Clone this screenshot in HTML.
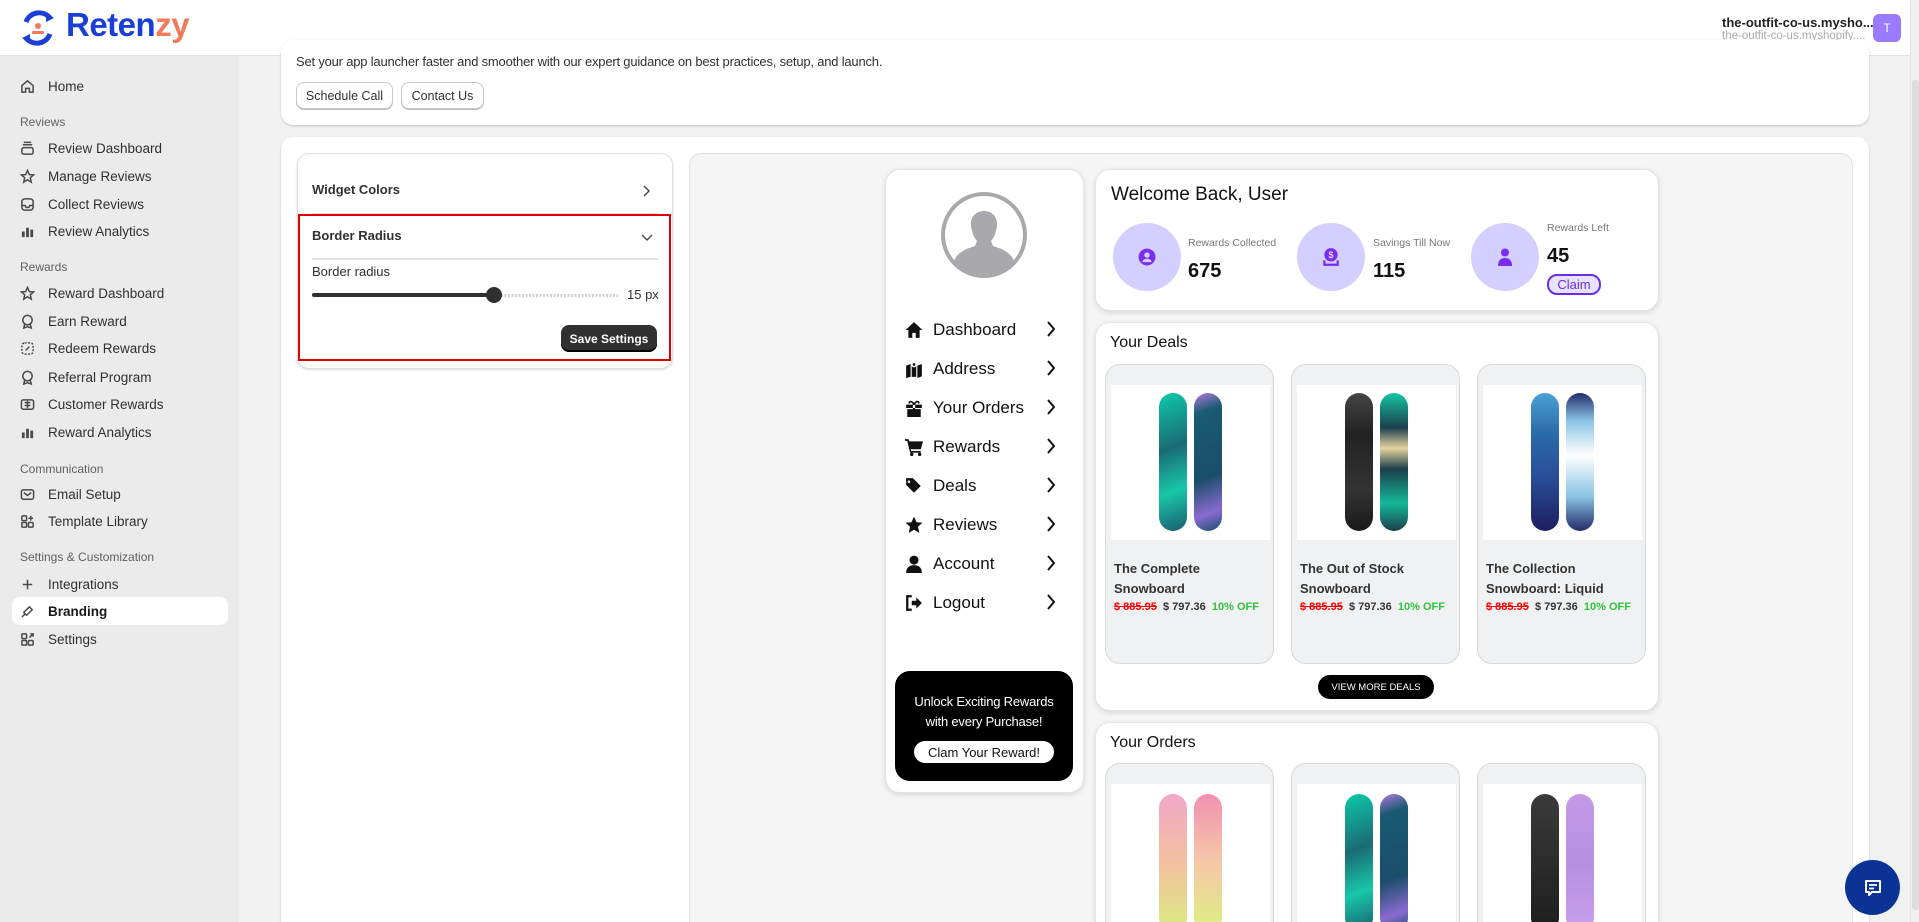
<!DOCTYPE html>
<html><head><meta charset="utf-8">
<style>
*{box-sizing:border-box;margin:0;padding:0}
html,body{width:1919px;height:922px;overflow:hidden}
body{background:#f1f1f1;font-family:"Liberation Sans",sans-serif;color:#303030}
#root{position:relative;width:1919px;height:922px;overflow:hidden;background:#f1f1f1}
.abs{position:absolute}
#hdr{left:0;top:0;width:1910px;height:56px;background:#fff;border-bottom:1px solid #e1e1e1}
#sb{left:0;top:56px;width:239px;height:866px;background:#ebebeb}
.si{position:absolute;left:20px;font-size:13.5px;color:#303030;display:flex;align-items:center;height:20px}
.si svg{width:15px;height:15px;margin-right:13px;stroke:#4a4a4a;fill:none;stroke-width:1.6}
.sl{position:absolute;left:20px;font-size:12px;color:#616161}
.card{background:#fff;border-radius:12px;box-shadow:0 1px 2px rgba(0,0,0,.2)}
.btn{position:absolute;background:#fff;border:1px solid #c9c9c9;border-radius:8px;font-size:12.5px;display:flex;align-items:center;justify-content:center;box-shadow:0 1px 0 #bbb}
.pc{position:absolute;background:#fff;border-radius:15px;box-shadow:0 2px 6px rgba(0,0,0,.12);border:1px solid #e4e4e4}
.mi{position:absolute;left:905px;width:159px;display:flex;align-items:center;font-size:17px;color:#111;height:22px}
.mi .ic{width:18px;height:18px;margin-right:10px;fill:#111}
.mi .ch{position:absolute;right:8px;top:2px;width:10px;height:16px}
.circ{position:absolute;width:68px;height:68px;border-radius:50%;background:#d3d0ff;display:flex;align-items:center;justify-content:center}
.prod{position:absolute;width:169px;height:300px;background:#f0f1f3;border:1px solid #d8d8d8;border-radius:15px;overflow:hidden}
.prod .img{position:absolute;left:5px;top:20px;width:159px;height:155px;background:#fff}
.board{position:absolute;width:28px;height:138px;border-radius:14px}
.prod .t{position:absolute;left:8px;top:194px;font-size:13px;font-weight:bold;line-height:20px;color:#333}
.prod .p{position:absolute;left:8px;top:236px;font-size:11px;font-weight:bold;white-space:nowrap}
</style></head><body><div id="root">

<div id="hdr" class="abs">
  <svg class="abs" style="left:18px;top:8px" width="40" height="40" viewBox="0 0 40 40">
    <path d="M8 14 A14 14 0 0 1 32 10" stroke="#1a3fd6" stroke-width="5" fill="none"/>
    <path d="M32 26 A14 14 0 0 1 8 30" stroke="#1a3fd6" stroke-width="5" fill="none"/>
    <path d="M28 4 L36 10 L28 14Z" fill="#1a3fd6"/><path d="M12 36 L4 30 L12 26Z" fill="#1a3fd6"/>
    <circle cx="20" cy="18" r="3" fill="#f07a5a"/><rect x="14" y="23" width="12" height="3" rx="1.5" fill="#f07a5a"/>
  </svg>
  <div class="abs" style="left:66px;top:6px;font-size:33px;font-weight:bold;letter-spacing:-0.5px"><span style="color:#1a3fd6">Reten</span><span style="color:#f07a5a">zy</span></div>
  <div class="abs" style="left:1722px;top:15px;font-size:13px;font-weight:bold;color:#222">the-outfit-co-us.mysho...</div>
  <div class="abs" style="left:1722px;top:30px;font-size:11.5px;color:#aaa">the-outfit-co-us.myshopify....</div>
  <div class="abs" style="left:1873px;top:14px;width:28px;height:28px;border-radius:6px;background:#9a7bff;color:#fff;font-size:12px;display:flex;align-items:center;justify-content:center">T</div>
</div>
<div class="abs" style="left:1910px;top:0;width:9px;height:922px;background:#f0f0f0;border-left:1px solid #e4e4e4"><div style="position:absolute;left:1px;top:80px;width:7px;height:830px;background:#dcdcdc;border-radius:4px"></div></div>

<div id="sb" class="abs"></div>
<div class="si" style="top:76px"><svg viewBox="0 0 16 16"><path d="M2 7 L8 2 L14 7 V14 H10 V10 H6 V14 H2Z"/></svg>Home</div>
<div class="sl" style="top:115px">Reviews</div>
<div class="si" style="top:138px"><svg viewBox="0 0 16 16"><rect x="2" y="7" width="12" height="7" rx="2"/><path d="M3 4H13M4 1.5H12"/></svg>Review Dashboard</div>
<div class="si" style="top:166px"><svg viewBox="0 0 16 16"><path d="M8 1.5 L10 6 L14.5 6.3 L11 9.3 L12 14 L8 11.5 L4 14 L5 9.3 L1.5 6.3 L6 6Z"/></svg>Manage Reviews</div>
<div class="si" style="top:194px"><svg viewBox="0 0 16 16"><rect x="2" y="2" width="12" height="12" rx="3"/><path d="M2 9H5.5L6.5 11H9.5L10.5 9H14"/></svg>Collect Reviews</div>
<div class="si" style="top:221px"><svg viewBox="0 0 16 16" style="fill:#4a4a4a;stroke:none"><rect x="2" y="8" width="3" height="6"/><rect x="6.5" y="4" width="3" height="10"/><rect x="11" y="6" width="3" height="8"/></svg>Review Analytics</div>
<div class="sl" style="top:260px">Rewards</div>
<div class="si" style="top:283px"><svg viewBox="0 0 16 16"><path d="M8 1.5 L10 6 L14.5 6.3 L11 9.3 L12 14 L8 11.5 L4 14 L5 9.3 L1.5 6.3 L6 6Z"/></svg>Reward Dashboard</div>
<div class="si" style="top:311px"><svg viewBox="0 0 16 16"><circle cx="8" cy="6.5" r="5"/><path d="M5 11 L4 15 L8 13.5 L12 15 L11 11"/></svg>Earn Reward</div>
<div class="si" style="top:338px"><svg viewBox="0 0 16 16" stroke-dasharray="2 1.6"><rect x="2" y="2" width="12" height="12" rx="3"/><path d="M6 10L10 6" stroke-dasharray="none"/></svg>Redeem Rewards</div>
<div class="si" style="top:367px"><svg viewBox="0 0 16 16"><circle cx="8" cy="6.5" r="5"/><path d="M5 11 L4 15 L8 13.5 L12 15 L11 11"/></svg>Referral Program</div>
<div class="si" style="top:394px"><svg viewBox="0 0 16 16"><rect x="1.5" y="3" width="13" height="10" rx="2"/><path d="M5 6H11M5 9H11M8 4V12"/></svg>Customer Rewards</div>
<div class="si" style="top:422px"><svg viewBox="0 0 16 16" style="fill:#4a4a4a;stroke:none"><rect x="2" y="8" width="3" height="6"/><rect x="6.5" y="4" width="3" height="10"/><rect x="11" y="6" width="3" height="8"/></svg>Reward Analytics</div>
<div class="sl" style="top:462px">Communication</div>
<div class="si" style="top:484px"><svg viewBox="0 0 16 16"><rect x="1.5" y="3" width="13" height="10" rx="2"/><path d="M4 6L8 9L12 6"/></svg>Email Setup</div>
<div class="si" style="top:511px"><svg viewBox="0 0 16 16"><rect x="2" y="2" width="5" height="5" rx="1"/><rect x="2" y="9" width="5" height="5" rx="1"/><rect x="9" y="9" width="5" height="5" rx="1"/><path d="M11.5 2V7M9 4.5H14"/></svg>Template Library</div>
<div class="sl" style="top:550px">Settings &amp; Customization</div>
<div class="si" style="top:574px"><svg viewBox="0 0 16 16"><path d="M8 3V13M3 8H13"/></svg>Integrations</div>
<div class="abs" style="left:12px;top:597px;width:216px;height:28px;background:#fff;border-radius:8px"></div>
<div class="si" style="top:601px;font-weight:bold;color:#1a1a1a"><svg viewBox="0 0 16 16"><path d="M2 14L5 11M4 9L7 12L13 6L10 3Z"/></svg>Branding</div>
<div class="si" style="top:629px"><svg viewBox="0 0 16 16"><rect x="2" y="2" width="5" height="5" rx="1"/><rect x="2" y="9" width="5" height="5" rx="1"/><rect x="9" y="9" width="5" height="5" rx="1"/><path d="M10 6L14 2M11 2H14V5"/></svg>Settings</div>

<div class="abs card" style="left:281px;top:40px;width:1588px;height:85px"></div>
<div class="abs" style="left:296px;top:54px;font-size:13px;letter-spacing:-0.2px;color:#303030">Set your app launcher faster and smoother with our expert guidance on best practices, setup, and launch.</div>
<div class="btn" style="left:296px;top:82px;width:97px;height:27px">Schedule Call</div>
<div class="btn" style="left:401px;top:82px;width:83px;height:27px">Contact Us</div>

<div class="abs card" style="left:281px;top:137px;width:1588px;height:785px;border-radius:12px 12px 0 0"></div>

<div class="abs" style="left:297px;top:153px;width:376px;height:216px;background:#fff;border:1px solid #e0e0e0;border-radius:12px;box-shadow:0 1px 2px rgba(0,0,0,.15)"></div>
<div class="abs" style="left:312px;top:182px;font-size:13px;font-weight:bold;color:#303030">Widget Colors</div>
<svg class="abs" style="left:641px;top:185px" width="10" height="12" viewBox="0 0 10 12"><path d="M3 1L8 6L3 11" stroke="#444" stroke-width="1.4" fill="none"/></svg>
<div class="abs" style="left:312px;top:213px;width:346px;height:1px;background:#e3e3e3"></div>
<div class="abs" style="left:298px;top:214px;width:373px;height:147px;border:2px solid #e00000"></div>
<div class="abs" style="left:312px;top:228px;font-size:13px;font-weight:bold;color:#303030">Border Radius</div>
<svg class="abs" style="left:641px;top:232px" width="12" height="10" viewBox="0 0 12 10"><path d="M1 3L6 8L11 3" stroke="#444" stroke-width="1.4" fill="none"/></svg>
<div class="abs" style="left:312px;top:258px;width:346px;height:2px;background:#e3e3e3"></div>
<div class="abs" style="left:312px;top:264px;font-size:13px;color:#303030">Border radius</div>
<div class="abs" style="left:312px;top:293px;width:182px;height:4px;background:#303030;border-radius:2px"></div>
<div class="abs" style="left:494px;top:294px;width:124px;height:3px;background:repeating-linear-gradient(90deg,#d0d0d0 0 2px,transparent 2px 3.5px)"></div>
<div class="abs" style="left:486px;top:287px;width:16px;height:16px;border-radius:50%;background:#303030"></div>
<div class="abs" style="left:627px;top:287px;font-size:13px;color:#303030">15 px</div>
<div class="abs" style="left:561px;top:325px;width:96px;height:27px;background:#303030;border-radius:8px;color:#fff;font-size:12px;font-weight:bold;display:flex;align-items:center;justify-content:center;box-shadow:inset 0 -2px 0 #000">Save Settings</div>

<div class="abs" style="left:689px;top:153px;width:1164px;height:769px;background:#f5f5f5;border:1px solid #e0e0e0;border-bottom:none;border-radius:12px 12px 0 0"></div>

<div class="pc" style="left:885px;top:169px;width:199px;height:624px"></div>
<svg class="abs" style="left:940px;top:191px" width="88" height="88" viewBox="0 0 88 88">
  <circle cx="44" cy="44" r="41" fill="#fff" stroke="#a9a9ad" stroke-width="4"/>
  <path d="M44 20c-9 0-14 7-13 15 1 6 3 12 6 15l-2 5c-10 3-18 7-21 15 8 9 18 13 30 13s22-4 30-13c-3-8-11-12-21-15l-2-5c3-3 5-9 6-15 1-8-4-15-13-15z" fill="#a9a9ad"/>
</svg>
<div class="mi" style="top:319px"><svg class="ic" viewBox="0 0 16 16"><path d="M8 1L0.5 8H3V15H6.5V10.5H9.5V15H13V8H15.5Z"/></svg>Dashboard<svg class="ch" viewBox="0 0 10 16"><path d="M2 1L8 8L2 15" stroke="#111" stroke-width="2" fill="none"/></svg></div>
<div class="mi" style="top:358px"><svg class="ic" viewBox="0 0 16 16"><path d="M1 5L5 3.5V15L1 16ZM6 3.5L10 5V15L6 15ZM11 5L15 3.5V14.5L11 16Z"/><circle cx="8" cy="4" r="2.5" fill="#fff"/><circle cx="8" cy="4" r="1.2"/></svg>Address<svg class="ch" viewBox="0 0 10 16"><path d="M2 1L8 8L2 15" stroke="#111" stroke-width="2" fill="none"/></svg></div>
<div class="mi" style="top:397px"><svg class="ic" viewBox="0 0 16 16"><path d="M1 5H15V8H1ZM2 9H7V16H2ZM9 9H14V16H9ZM7 5V16H9V5Z"/><path d="M8 5C6 1 3 2 4 4M8 5C10 1 13 2 12 4" stroke="#111" fill="none" stroke-width="1.5"/></svg>Your Orders<svg class="ch" viewBox="0 0 10 16"><path d="M2 1L8 8L2 15" stroke="#111" stroke-width="2" fill="none"/></svg></div>
<div class="mi" style="top:436px"><svg class="ic" viewBox="0 0 16 16"><path d="M0 1H3L4 3H16L14 10H5L5.5 11.5H14V13H4.5L2 2.5H0Z"/><circle cx="6" cy="14.5" r="1.5"/><circle cx="13" cy="14.5" r="1.5"/></svg>Rewards<svg class="ch" viewBox="0 0 10 16"><path d="M2 1L8 8L2 15" stroke="#111" stroke-width="2" fill="none"/></svg></div>
<div class="mi" style="top:475px"><svg class="ic" viewBox="0 0 16 16"><path d="M1 1H7L14 8L8 14L1 7ZM3.5 3a1.2 1.2 0 1 0 0.1 0Z"/></svg>Deals<svg class="ch" viewBox="0 0 10 16"><path d="M2 1L8 8L2 15" stroke="#111" stroke-width="2" fill="none"/></svg></div>
<div class="mi" style="top:514px"><svg class="ic" viewBox="0 0 16 16"><path d="M8 0.5L10.3 5.5L15.5 6L11.5 9.6L12.7 15L8 12.2L3.3 15L4.5 9.6L0.5 6L5.7 5.5Z"/></svg>Reviews<svg class="ch" viewBox="0 0 10 16"><path d="M2 1L8 8L2 15" stroke="#111" stroke-width="2" fill="none"/></svg></div>
<div class="mi" style="top:553px"><svg class="ic" viewBox="0 0 16 16"><circle cx="8" cy="4.5" r="4"/><path d="M1 16C1 11 4 9 8 9S15 11 15 16Z"/></svg>Account<svg class="ch" viewBox="0 0 10 16"><path d="M2 1L8 8L2 15" stroke="#111" stroke-width="2" fill="none"/></svg></div>
<div class="mi" style="top:592px"><svg class="ic" viewBox="0 0 16 16"><path d="M6 2H2V14H6" stroke="#111" stroke-width="2" fill="none"/><path d="M6 6H10V3L15 8L10 13V10H6Z"/></svg>Logout<svg class="ch" viewBox="0 0 10 16"><path d="M2 1L8 8L2 15" stroke="#111" stroke-width="2" fill="none"/></svg></div>
<div class="abs" style="left:895px;top:671px;width:178px;height:110px;background:#000;border-radius:15px"></div>
<div class="abs" style="left:895px;top:692px;width:178px;text-align:center;color:#fff;font-size:13px;line-height:20px;letter-spacing:-0.2px">Unlock Exciting Rewards<br>with every Purchase!</div>
<div class="abs" style="left:914px;top:741px;width:140px;height:22px;background:#fff;border-radius:11px;font-size:13px;color:#111;display:flex;align-items:center;justify-content:center">Clam Your Reward!</div>

<div class="pc" style="left:1095px;top:169px;width:564px;height:142px"></div>
<div class="abs" style="left:1111px;top:184px;font-size:19px;color:#111">Welcome Back, User</div>
<div class="circ" style="left:1113px;top:223px"><svg width="18" height="18" viewBox="0 0 16 16"><circle cx="8" cy="8" r="7.5" fill="#7a2df0"/><circle cx="8" cy="6.3" r="2.4" fill="#d3d0ff"/><path d="M3.8 12.5C4.5 10 6 9.5 8 9.5S11.5 10 12.2 12.5" fill="#d3d0ff"/></svg></div>
<div class="abs" style="left:1188px;top:237px;font-size:10.5px;color:#777">Rewards Collected</div>
<div class="abs" style="left:1188px;top:260px;font-size:20px;font-weight:bold;color:#111">675</div>
<div class="circ" style="left:1297px;top:223px"><svg width="18" height="20" viewBox="0 0 16 18"><circle cx="8" cy="7" r="6" fill="#7a2df0"/><text x="8" y="10" font-size="8" fill="#fff" text-anchor="middle" font-family="Liberation Sans">$</text><path d="M1 12V17H15V12H13V15H3V12Z" fill="#7a2df0"/></svg></div>
<div class="abs" style="left:1373px;top:237px;font-size:10.5px;color:#777">Savings Till Now</div>
<div class="abs" style="left:1373px;top:260px;font-size:20px;font-weight:bold;color:#111">115</div>
<div class="circ" style="left:1471px;top:223px"><svg width="16" height="18" viewBox="0 0 16 18"><circle cx="8" cy="4.5" r="4" fill="#7a2df0"/><path d="M1 18C1 12 4 10 8 10S15 12 15 18Z" fill="#7a2df0"/></svg></div>
<div class="abs" style="left:1547px;top:222px;font-size:10.5px;color:#777">Rewards Left</div>
<div class="abs" style="left:1547px;top:245px;font-size:20px;font-weight:bold;color:#111">45</div>
<div class="abs" style="left:1547px;top:274px;width:54px;height:21px;border:2px solid #6b2ee6;border-radius:10px;background:#e6e2ff;color:#6b2ee6;font-size:13px;display:flex;align-items:center;justify-content:center">Claim</div>

<div class="pc" style="left:1095px;top:322px;width:564px;height:389px"></div>
<div class="abs" style="left:1110px;top:334px;font-size:16px;color:#111">Your Deals</div>

<div class="prod" style="left:1105px;top:364px"><div class="img">
  <div class="board" style="left:48px;top:8px;background:linear-gradient(160deg,#0cc9a8,#1b6b74 40%,#18c7a8 70%,#1a5d6e)"></div>
  <div class="board" style="left:83px;top:8px;background:linear-gradient(160deg,#b47be0 0,#1a5a72 15%,#1a4d6a 60%,#8a6ad0 85%,#15506a)"></div>
</div><div class="t">The Complete<br>Snowboard</div><div class="p"><s style="color:#f00">$ 885.95</s>&nbsp; <span style="color:#333">$ 797.36</span>&nbsp; <span style="color:#2fc43a">10% OFF</span></div></div>

<div class="prod" style="left:1291px;top:364px"><div class="img">
  <div class="board" style="left:48px;top:8px;background:linear-gradient(180deg,#444,#222 30%,#333 70%,#1a1a1a)"></div>
  <div class="board" style="left:83px;top:8px;background:linear-gradient(180deg,#13c5a4,#1c3e4c 25%,#e5d4a0 40%,#1c3e4c 55%,#14b89b 80%,#1c3e4c)"></div>
</div><div class="t">The Out of Stock<br>Snowboard</div><div class="p"><s style="color:#f00">$ 885.95</s>&nbsp; <span style="color:#333">$ 797.36</span>&nbsp; <span style="color:#2fc43a">10% OFF</span></div></div>

<div class="prod" style="left:1477px;top:364px"><div class="img">
  <div class="board" style="left:48px;top:8px;background:linear-gradient(180deg,#4aa0d4,#2a6aa8 30%,#2a4e9a 60%,#1c1f5e)"></div>
  <div class="board" style="left:83px;top:8px;background:linear-gradient(180deg,#232c6a,#8ac4e4 20%,#fff 45%,#8ac4e4 75%,#232c6a)"></div>
</div><div class="t">The Collection<br>Snowboard: Liquid</div><div class="p"><s style="color:#f00">$ 885.95</s>&nbsp; <span style="color:#333">$ 797.36</span>&nbsp; <span style="color:#2fc43a">10% OFF</span></div></div>

<div class="abs" style="left:1318px;top:675px;width:116px;height:24px;background:#000;border-radius:12px;color:#fff;font-size:9.5px;display:flex;align-items:center;justify-content:center">VIEW MORE DEALS</div>

<div class="pc" style="left:1095px;top:722px;width:564px;height:200px;border-bottom:none;border-radius:15px 15px 0 0"></div>
<div class="abs" style="left:1110px;top:734px;font-size:16px;color:#111">Your Orders</div>
<div class="prod" style="left:1105px;top:763px;height:159px;border-bottom:none;border-radius:15px 15px 0 0"><div class="img">
  <div class="board" style="left:48px;top:10px;background:linear-gradient(180deg,#f0a8c8,#f4c0a0 50%,#d8ec80)"></div>
  <div class="board" style="left:83px;top:10px;background:linear-gradient(180deg,#f090b0,#f6c8a8 50%,#dcf080)"></div>
</div></div>
<div class="prod" style="left:1291px;top:763px;height:159px;border-bottom:none;border-radius:15px 15px 0 0"><div class="img">
  <div class="board" style="left:48px;top:10px;background:linear-gradient(160deg,#0cc9a8,#1b6b74 40%,#18c7a8 70%,#1a5d6e)"></div>
  <div class="board" style="left:83px;top:10px;background:linear-gradient(160deg,#b47be0 0,#1a5a72 15%,#1a4d6a 60%,#8a6ad0 85%,#15506a)"></div>
</div></div>
<div class="prod" style="left:1477px;top:763px;height:159px;border-bottom:none;border-radius:15px 15px 0 0"><div class="img">
  <div class="board" style="left:48px;top:10px;background:linear-gradient(180deg,#3a3a3a,#1e1e1e)"></div>
  <div class="board" style="left:83px;top:10px;background:linear-gradient(180deg,#c49ae8,#b88ee0 50%,#c9a0ec)"></div>
</div></div>

<div class="abs" style="left:1845px;top:860px;width:55px;height:55px;border-radius:50%;background:#0b3396;display:flex;align-items:center;justify-content:center">
  <svg width="20" height="20" viewBox="0 0 20 20"><path d="M3 3H17V14H9L6 17V14H3Z" stroke="#fff" stroke-width="2" fill="none" stroke-linejoin="round"/><path d="M6 7H14M6 10.5H11" stroke="#fff" stroke-width="1.8"/></svg>
</div>
</div></body></html>
